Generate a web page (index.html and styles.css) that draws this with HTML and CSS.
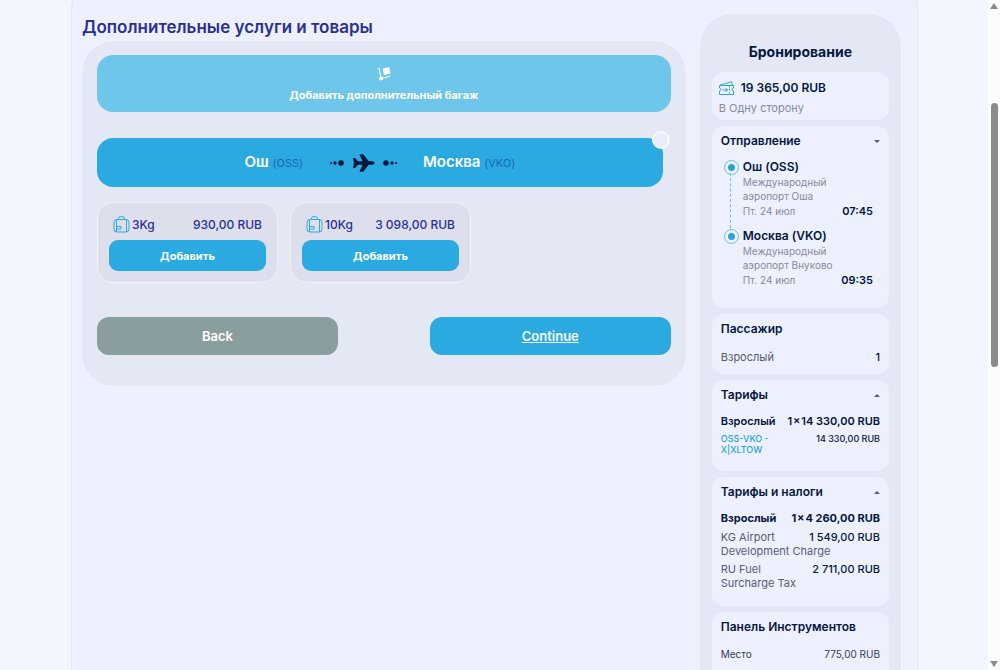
FILE: index.html
```html
<!doctype html>
<html lang="ru">

<head>
    <meta charset="utf-8">
    <meta name="viewport" content="width=device-width, initial-scale=1">
    <title>Дополнительные услуги и товары</title>
    <link rel="stylesheet" href="styles.css">
</head>

<body>
    <div class="page">
        <div class="container">
            <main class="services">
                <h1>Дополнительные услуги и товары</h1>

                <section class="panel">
                    <button type="button" class="baggage-tab">
                        <svg class="icon-dolly" viewBox="0 0 14 14" width="14" height="14">
                            <path d="M.5 1.500h1.700l1.800 9M4.500 11.500L13.500 9" fill="none" stroke="#fff" stroke-width="1.200" />
                            <path d="M6 2.200q-.2-.7.500-.9L11.500.3q.8-.2 1 .6l1 5q.1.700-.6.900L7.900 8q-.8.200-1-.6z" fill="#fff" />
                            <circle cx="4" cy="11.500" r="2" fill="#fff" />
                        </svg>
                        <span>Добавить дополнительный багаж</span>
                    </button>

                    <div class="route">
                        <span class="route-city">Ош <small>(OSS)</small></span>
                        <svg class="route-plane" viewBox="0 0 68 20" width="68" height="20">
                            <g fill="#041840">
                                <circle cx="2" cy="10" r="1" />
                                <circle cx="6" cy="10" r="1.700" />
                                <circle cx="12" cy="10" r="2.800" />
                                <circle cx="57" cy="10" r="2.800" />
                                <circle cx="63" cy="10" r="1.700" />
                                <circle cx="67" cy="10" r="1" />
                                <path d="M24 5h2.200l2.800 3.200h4.600L30.600 2q-.2-.8.6-.8h3l5.600 7h3.400q2.400.2 2.400 1.800t-2.400 1.800h-3.400l-5.600 7h-3q-.8 0-.6-.8l3-6.200h-4.600L26.200 15H24l.9-5z" />
                            </g>
                        </svg>
                        <span class="route-city">Москва <small>(VKO)</small></span>
                        <span class="route-mark"></span>
                    </div>

                    <div class="options">
                        <div class="option">
                            <div class="option-info">
                                <svg class="icon-bag" width="17" height="17">
                                    <use href="#bag" />
                                </svg>
                                <span>3Kg</span>
                                <span class="option-price">930,00 RUB</span>
                            </div>
                            <button type="button" class="btn-add">Добавить</button>
                        </div>
                        <div class="option">
                            <div class="option-info">
                                <svg class="icon-bag" width="17" height="17">
                                    <use href="#bag" />
                                </svg>
                                <span>10Kg</span>
                                <span class="option-price">3 098,00 RUB</span>
                            </div>
                            <button type="button" class="btn-add">Добавить</button>
                        </div>
                    </div>

                    <div class="actions">
                        <button type="button" class="btn-nav btn-back">Back</button>
                        <a href="#" class="btn-nav btn-continue">Continue</a>
                    </div>
                </section>
            </main>

            <aside class="booking">
                <h2>Бронирование</h2>

                <section class="card card-total">
                    <div class="total">
                        <svg class="icon-ticket" viewBox="0 0 15 14" width="15" height="14" fill="none" stroke="#2baae2">
                            <path d="M.5 4.500h14v2.500q-1.500.2-1.500 1.500t1.500 1.500v3.500H.5V10Q2 9.800 2 8.500T.5 7zM1 4L12.500.7l.9 3.300M10.500 5v1.500M10.500 8v1.500M10.500 11v1.500" />
                            <path d="M3.500 9h5M6.500 7l2 2-2 2" />
                        </svg>
                        <span>19 365,00 RUB</span>
                    </div>
                    <p class="trip-type">В Одну сторону</p>
                </section>

                <section class="card card-trip">
                    <button type="button" class="card-head">Отправление <span class="caret caret-down"></span></button>
                    <ol class="stops">
                        <li class="stop">
                            <h4>Ош (OSS)</h4>
                            <p>Международный аэропорт Оша</p>
                            <div class="stop-time"><span>Пт. 24 июл</span><time>07:45</time></div>
                        </li>
                        <li class="stop">
                            <h4>Москва (VKO)</h4>
                            <p>Международный аэропорт Внуково</p>
                            <div class="stop-time"><span>Пт. 24 июл</span><time>09:35</time></div>
                        </li>
                    </ol>
                </section>

                <section class="card card-passenger">
                    <h3 class="card-head">Пассажир</h3>
                    <div class="row row-passenger"><span>Взрослый</span><b>1</b></div>
                </section>

                <section class="card card-fares">
                    <button type="button" class="card-head">Тарифы <span class="caret"></span></button>
                    <div class="row row-main"><span>Взрослый</span><b>1&hairsp;×&hairsp;14 330,00 RUB</b></div>
                    <div class="row row-fare"><span>OSS-VKO - X|XLTOW</span><b>14 330,00 RUB</b></div>
                </section>

                <section class="card card-taxes">
                    <button type="button" class="card-head">Тарифы и налоги <span class="caret"></span></button>
                    <div class="row row-main row-strong"><span>Взрослый</span><b>1&hairsp;×&hairsp;4 260,00 RUB</b></div>
                    <div class="tax">
                        <div class="row"><span>KG Airport</span><b>1 549,00 RUB</b></div>
                        <span>Development Charge</span>
                    </div>
                    <div class="tax">
                        <div class="row"><span>RU Fuel</span><b>2 711,00 RUB</b></div>
                        <span>Surcharge Tax</span>
                    </div>
                </section>

                <section class="card card-tools">
                    <h3 class="card-head">Панель Инструментов</h3>
                    <div class="row row-seat"><span>Место</span><span>775,00 RUB</span></div>
                </section>
            </aside>
        </div>
    </div>

    <div class="scrollbar">
        <span class="arrow arrow-up"></span>
        <span class="thumb"></span>
        <span class="arrow arrow-down"></span>
    </div>

    <!-- shared icons -->
    <svg class="sprite" width="0" height="0">
        <symbol id="bag" viewBox="0 0 17 17">
            <g fill="none" stroke="#2baae2">
                <rect x="1" y="3.500" width="15" height="12.500" rx="3" />
                <path d="M5.500 3.500V2.500q0-1.800 1.800-1.800h2.400q1.800 0 1.800 1.800v1M3.500 4v12M13.500 4v12M3.500 10.500h4.500v2.500H3.500" />
            </g>
        </symbol>
    </svg>
</body>

</html>
```
FILE: styles.css
```css
* {
    box-sizing: border-box;
}

body {
    display: flex;
    height: 100vh;
    margin: 0;
    overflow: hidden;
    background: #f2f7ff;
    color: #041840;
    font-family: Inter, "Open Sans", sans-serif;
    font-size: 12px;
    line-height: 14px;
}

h1,
h2,
h3,
h4,
p,
ol {
    margin: 0;
    padding: 0;
}

button {
    border: 0;
    padding: 0;
    background: none;
    color: inherit;
    font: inherit;
    cursor: pointer;
}

b {
    font-weight: 500;
    white-space: nowrap;
}

.sprite {
    position: absolute;
}

.page {
    flex: 1;
    padding: 0 71px 0 72px;
}

.container {
    display: grid;
    grid-template-columns: minmax(0, 3fr) minmax(0, 1fr);
    gap: 14px;
    margin-top: -16px;
    padding: 30px 16px 0 10px;
    border-radius: 24px 24px 0 0;
    background: #edf0ff;
    box-shadow: 0 0 2px #b9c0d4;
}

h1 {
    color: #2b3190;
    font-size: 17px;
    font-weight: 600;
    line-height: 27px;
}

/* services */

.panel {
    padding: 14px 15px 31px;
    border-radius: 32px;
    background: #e4e8f4;
    box-shadow: 0 0 0 1px #f1f4ff;
}

.baggage-tab {
    display: flex;
    flex-direction: column;
    align-items: center;
    gap: 7px;
    width: 100%;
    padding: 12px 0 10px;
    border-radius: 16px;
    background: #6ec6ea;
    color: #fff;
    font-size: 11px;
    font-weight: 700;
}

.route {
    position: relative;
    display: flex;
    align-items: center;
    justify-content: center;
    gap: 26px;
    height: 49px;
    margin: 26px 8px 15px 0;
    border-radius: 16px;
    background: #2baae2;
    color: #fff;
    font-size: 15px;
    font-weight: 600;
}

.route small {
    color: #1768b3;
    font-size: 11px;
    font-weight: 400;
}

.route-mark {
    position: absolute;
    top: -7px;
    right: -7px;
    width: 18px;
    height: 18px;
    border: 2px solid #f8faff;
    border-radius: 50%;
    background: #e9ecfb;
}

.options {
    display: flex;
    gap: 12px;
}

.option {
    width: 181px;
    padding: 12px 11px 11px;
    border: 1px solid #f1f3fc;
    border-radius: 16px;
    background: #dddfec;
}

.option-info {
    display: flex;
    align-items: center;
    gap: 2px;
    padding: 1px 4px 7px;
    color: #2b3190;
    font-weight: 500;
}

.option-price {
    margin-left: auto;
}

.btn-add {
    display: block;
    width: 100%;
    height: 31px;
    border-radius: 9px;
    background: #2baae2;
    color: #fff;
    font-size: 11px;
    font-weight: 700;
}

.actions {
    display: flex;
    justify-content: space-between;
    margin-top: 34px;
}

.btn-nav {
    width: 42%;
    border-radius: 12px;
    color: #fff;
    font-size: 13px;
    font-weight: 600;
    line-height: 38px;
    text-align: center;
}

.btn-back {
    background: #8a9ea0;
}

.btn-continue {
    background: #2baae2;
    text-decoration: underline;
}

/* booking summary */

.booking {
    padding: 28px 12px 0;
    border-radius: 32px 32px 0 0;
    background: #e4e8f4;
    box-shadow: 0 0 0 1px #f1f4ff;
}

.booking h2 {
    margin-bottom: 10px;
    font-size: 14px;
    font-weight: 700;
    line-height: 20px;
    text-align: center;
}

.card {
    margin-bottom: 6px;
    padding: 8px 9px;
    border-radius: 12px;
    background: #edf0ff;
}

.card-head {
    display: flex;
    align-items: center;
    justify-content: space-between;
    width: 100%;
    font-size: 12px;
    font-weight: 600;
    line-height: 14px;
}

.caret {
    border: 3px solid transparent;
    border-top: 0;
    border-bottom-color: #555d70;
}

.caret-down {
    border-top: 3px solid #555d70;
    border-bottom: 0;
}

.card-total {
    padding: 9px 7px 5px;
}

.total {
    display: flex;
    align-items: center;
    gap: 7px;
    font-size: 12px;
    font-weight: 600;
}

.trip-type {
    margin-top: 6px;
    color: #858ba0;
    font-size: 11px;
}

.card-trip {
    padding-bottom: 20px;
}

.stops {
    margin-top: 11px;
    list-style: none;
}

.stop {
    position: relative;
    padding: 0 7px 9px 22px;
    color: #858ba0;
    font-size: 10px;
}

.stop:last-child {
    padding-bottom: 0;
}

.stop h4 {
    color: #041840;
    font-size: 12px;
    font-weight: 600;
    line-height: 16px;
}

/* the dot beside a stop, and the line down to the next one */
.stop::before {
    content: "";
    position: absolute;
    top: 1px;
    left: 3px;
    width: 13px;
    height: 13px;
    border: 1px solid #68c0e6;
    border-radius: 50%;
    background: radial-gradient(#2ba4d5 0 3px, transparent 4px);
}

.stop:first-child::after {
    content: "";
    position: absolute;
    top: 14px;
    bottom: 0;
    left: 9px;
    border-left: 1px dashed #68c0e6;
}

.stop-time {
    display: flex;
    align-items: center;
    justify-content: space-between;
    line-height: 16px;
}

.stop-time time {
    color: #041840;
    font-size: 11px;
    font-weight: 600;
}

.row {
    display: flex;
    justify-content: space-between;
}

.row-passenger {
    margin-top: 14px;
    padding-bottom: 2px;
    color: #555d78;
    font-size: 11px;
}

.row-passenger b {
    color: #041840;
}

.row-main {
    margin: 12px 0 5px;
    font-size: 11px;
    font-weight: 600;
}

.row-main b {
    font-weight: 600;
}

.row-strong,
.row-strong b {
    font-weight: 700;
}

.row-fare {
    padding-bottom: 8px;
    font-size: 9px;
    line-height: 11px;
}

.row-fare span {
    width: 60px;
    color: #2ba4d5;
    font-weight: 500;
}

.tax {
    margin-bottom: 4px;
    color: #555d78;
    font-size: 11px;
}

.tax b {
    color: #041840;
}

.card-taxes {
    padding-bottom: 12px;
}

.card-tools {
    padding-bottom: 20px;
}

.row-seat {
    margin-top: 13px;
    color: #343d5c;
    font-size: 10px;
}

/* scrollbar track */

.scrollbar {
    display: flex;
    flex-direction: column;
    align-items: center;
    width: 12px;
    padding: 3px 0;
    background: #fcfcfc;
}

.arrow {
    border: 4px solid transparent;
}

.arrow-up {
    border-top: 0;
    border-bottom: 6px solid #8b8b8b;
}

.arrow-down {
    margin-top: auto;
    border-top: 6px solid #8b8b8b;
    border-bottom: 0;
}

.thumb {
    width: 7px;
    height: 264px;
    margin-top: 94px;
    border-radius: 4px;
    background: #8b8b8b;
}
```
